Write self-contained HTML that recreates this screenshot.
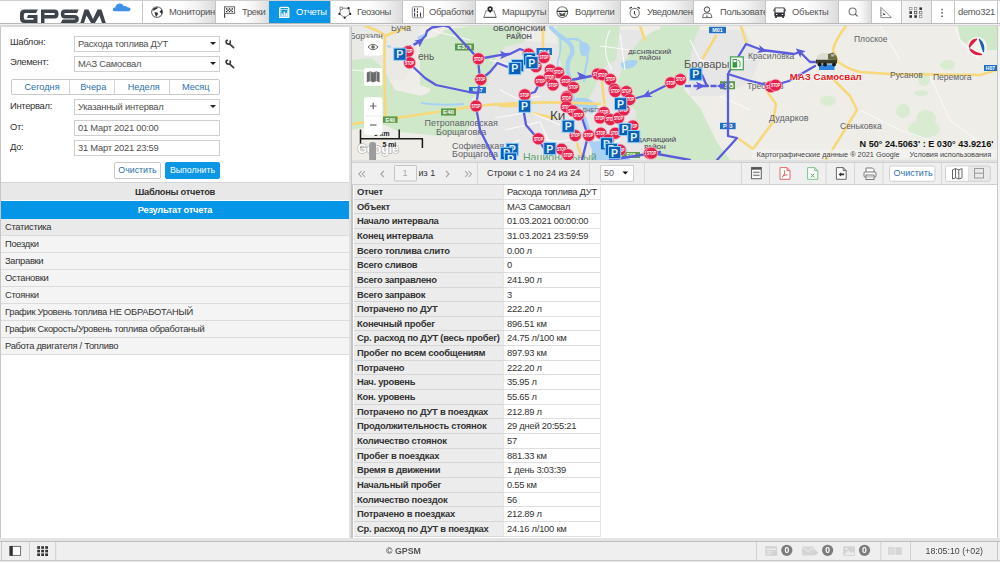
<!DOCTYPE html>
<html><head><meta charset="utf-8">
<style>
*{box-sizing:border-box}
html,body{margin:0;padding:0}
body{filter:blur(0.3px)}
body{width:1000px;height:562px;overflow:hidden;position:relative;font-family:"Liberation Sans",sans-serif;font-size:8.8px;color:#333;background:#fff}
.a{position:absolute}
#hdr{left:0;top:0;width:1000px;height:24px;background:#fff;border-top:1px solid #cfcfcf;border-bottom:1px solid #b9b9b9}
#hdr2{left:0;top:24px;width:352px;height:3px;background:linear-gradient(#f0f0f0 0%,#f0f0f0 25%,#d9d9d9 40%,#dadada 100%);z-index:2}
#hdr3{left:352px;top:24px;width:648px;height:2px;background:linear-gradient(#f0f0f0 0%,#f0f0f0 35%,#d9d9d9 50%,#dadada 100%)}
.tab{position:absolute;top:1px;height:22px;border-left:1px solid #c4c4c4;background:linear-gradient(to right,#fff 0%,#fff 50%,#f2f2f2 75%,#dcdcdc 100%);white-space:nowrap;overflow:hidden;color:#555;line-height:22px}
.tab .ic{position:absolute;top:5px;left:9px;width:13px;height:13px}
.tab .tx{position:absolute;left:26px;top:0;font-size:9.4px;letter-spacing:-0.3px}
.tab.act{background:#0b97e6;color:#fff;border-left-color:#0b97e6}
/* left panel */
#lp{left:0;top:26px;width:350px;height:512px;background:#fff}
#lpb{left:0;top:26px;width:1px;height:512px;background:#c6c6c6}
.lbl{position:absolute;left:10px;color:#333;font-size:9.4px;letter-spacing:-0.3px}
.sel{position:absolute;left:74px;width:146px;height:16px;border:1px solid #cfcfcf;background:#fff;color:#505050;padding-left:3px;line-height:14px;white-space:nowrap;font-size:9.4px;letter-spacing:-0.25px}
.sel .arr{position:absolute;right:3.5px;top:5px;width:0;height:0;border-left:3px solid transparent;border-right:3px solid transparent;border-top:3px solid #222}
.btn{position:absolute;height:17px;border:1px solid #c8c8c8;border-radius:2px;background:#fff;color:#2d6fa8;text-align:center;line-height:15px}
.sec{position:absolute;left:1px;width:348px;font-weight:bold;text-align:center;font-size:9.3px;letter-spacing:-0.25px}
.li{position:absolute;left:1px;width:348px;height:17px;border-bottom:1px solid #dcdcdc;background:#f4f4f4;padding-left:4px;line-height:16px;color:#333;font-size:9.4px;letter-spacing:-0.3px}
/* right */
#sep{left:349px;top:26px;width:3px;height:512px;background:#e0e0e0;border-right:1px solid #c4c4c4}
#map{left:352px;top:26px;width:645px;height:134px;overflow:hidden;background:#e9eae6}
#sep2{left:352px;top:160px;width:645px;height:3px;background:#e0e0e0}
#tb{left:352px;top:162px;width:645px;height:23px;background:#efefef;border-top:1px solid #d0d0d0;border-bottom:1px solid #cfcfcf}
.vs{position:absolute;top:0;width:1px;height:21px;background:#d6d6d6}
#tbl{left:352px;top:185px;width:645px;height:353px;background:#fff;border-left:1px solid #c4c4c4}
.r{position:absolute;left:0;height:15px;white-space:nowrap;font-size:9.4px;letter-spacing:-0.25px}
.r .k{position:absolute;left:1px;top:0;width:149px;height:100%;background:#ececec;font-weight:bold;color:#333;padding-left:3px;line-height:14px;border-bottom:1px solid #d6d6d6}
.r .v{position:absolute;left:150px;top:0;width:98px;height:100%;background:#fff;color:#333;padding-left:3px;line-height:14px;border-bottom:1px solid #dedede;border-left:1px solid #e4e4e4;border-right:1px solid #e4e4e4}
#rb{left:997px;top:26px;width:1px;height:512px;background:#c8c8c8}
#rb2{left:998px;top:26px;width:2px;height:512px;background:#f4f4f4}
#bot{left:0;top:538px;width:1000px;height:3px;background:#e4e4e4}
#ftr{left:0;top:541px;width:1000px;height:20px;background:#efefef;border-top:1px solid #bdbdbd;border-bottom:1px solid #c9c9c9}
#ftr2{left:0;top:561px;width:1000px;height:1px;background:#e4e4e4}
</style></head><body>

<div id="hdr" class="a"></div>
<div id="hdr2" class="a"></div>
<div id="hdr3" class="a"></div>

<!-- logo -->
<svg class="a" style="left:0;top:0" width="142" height="24" viewBox="0 0 142 24">
  <g fill="#3d444b">
    <!-- G -->
    <path d="M24.5 9.5 H38 L36 13 H25.5 Q23.8 13 23.8 15 V17.5 Q23.8 19.8 25.5 19.8 H33.5 V18 H27 L28 15 H37.5 V23 H24.5 Q20 23 20 18.5 V14 Q20 9.5 24.5 9.5 Z"/>
    <!-- P -->
    <path d="M41 9.5 H54.5 Q58.5 9.5 58.5 13.5 V14.5 Q58.5 18.5 54.5 18.5 H44.5 V23 H41 Z M44.5 13 V15 H53.5 Q55 15 55 14 Q55 13 53.5 13 Z"/>
    <!-- S -->
    <path d="M64.5 9.5 H78.8 L77 13 H65.5 Q64.2 13 64.2 14 Q64.2 15 65.5 15 H74.5 Q78.8 15 78.8 19 Q78.8 23 74.5 23 H60.8 L62.5 19.5 H74 Q75.3 19.5 75.3 18.5 Q75.3 18.5 74 18.5 H65 Q60.8 18.5 60.8 14 Q60.8 9.5 64.5 9.5 Z"/>
    <!-- M -->
    <path d="M80.3 23 L84.5 9.5 H88.5 L93 19 L97.5 9.5 H101.5 L105.8 23 H102 L99.5 15.5 L95 23 H91 L86.5 15.5 L84 23 Z"/>
  </g>
  <path fill="#3f90e8" d="M114.5 11.2 Q112.6 11.2 112.8 9.2 Q113.2 7.4 115.3 7.6 Q115.8 4.3 119.2 3.6 Q122.6 3.2 124 6.3 Q126 5.6 127.4 7.2 Q130.8 7.5 130.6 9.6 Q130.2 11.2 128.6 11.2 Z"/>
</svg>

<!-- tabs -->
<div class="tab" style="left:142px;width:73px"><span class="tx">Мониторинг</span></div>
<div class="tab" style="left:215px;width:54px"><span class="tx">Треки</span></div>
<div class="tab act" style="left:269px;width:61px"><span class="tx">Отчеты</span></div>
<div class="tab" style="left:330px;width:72px"><span class="tx">Геозоны</span></div>
<div class="tab" style="left:402px;width:73px"><span class="tx">Обработки</span></div>
<div class="tab" style="left:475px;width:73px"><span class="tx">Маршруты</span></div>
<div class="tab" style="left:548px;width:72px"><span class="tx">Водители</span></div>
<div class="tab" style="left:620px;width:73px"><span class="tx">Уведомления</span></div>
<div class="tab" style="left:693px;width:72px"><span class="tx">Пользователи</span></div>
<div class="tab" style="left:765px;width:73px"><span class="tx">Объекты</span></div>
<div class="tab" style="left:838px;width:33px"></div>
<div class="tab" style="left:871px;width:30px;background:#fff"></div>
<div class="tab" style="left:901px;width:30px;background:linear-gradient(to right,#f4f4f4,#ececec)"></div>
<div class="tab" style="left:931px;width:23px;background:#fff"></div>
<div class="tab" style="left:954px;width:44px;background:#fff;border-right:1px solid #c4c4c4"><span class="tx" style="left:3px">demo321</span></div>

<svg class="a" style="left:0;top:0;pointer-events:none" width="1000" height="24" viewBox="0 0 1000 24">
  <!-- globe -->
  <circle cx="157" cy="12.1" r="5.4" fill="#fff" stroke="#6f6f6f" stroke-width="1.1"/>
  <path d="M152.5 10.5 Q153 8 156 7.2 L158.5 7.4 Q157 8.8 155.5 9.6 Q154 10.8 152.5 10.5 Z" fill="#2d2d2d"/>
  <path d="M154.5 12.5 Q156.5 11.8 158 13 Q157.5 15.2 156.2 17 Q155 14.5 154.5 12.5 Z" fill="#2d2d2d"/>
  <path d="M159.5 11.5 L162 9.6 Q162.8 12 162 14.5 Q161 13 159.5 11.5 Z" fill="#2d2d2d"/>
  <!-- flag -->
  <path d="M224.6 6.8 V17.7" stroke="#444" stroke-width="1.2"/>
  <rect x="224.6" y="6.8" width="10" height="6.6" fill="#fff" stroke="#666" stroke-width="1"/>
  <g fill="#333"><rect x="226" y="8.2" width="1.4" height="1.4"/><rect x="228.8" y="8.2" width="1.4" height="1.4"/><rect x="231.6" y="8.2" width="1.4" height="1.4"/>
  <rect x="227.4" y="9.6" width="1.4" height="1.4"/><rect x="230.2" y="9.6" width="1.4" height="1.4"/><rect x="226" y="11" width="1.4" height="1.2"/><rect x="228.8" y="11" width="1.4" height="1.2"/><rect x="231.6" y="11" width="1.4" height="1.2"/></g>
  <!-- reports (white on blue) -->
  <path d="M279.7 17.2 V8.8 Q279.7 7.4 281.2 7.4 H287.3 Q288.7 7.4 288.7 8.8 V17.2 Z" fill="none" stroke="#fff" stroke-width="1.4"/>
  <rect x="281" y="9.6" width="6.4" height="6.6" fill="none" stroke="#d6eefc" stroke-width="0.8"/>
  <g fill="#fff"><rect x="281.6" y="13.6" width="1.5" height="2.4"/><rect x="283.6" y="11.6" width="1.5" height="4.4"/><rect x="285.6" y="12.8" width="1.5" height="3.2"/></g>
  <!-- geozones -->
  <path d="M341.1 8.2 L348.6 8.2 L350.2 13.9 L344.7 17.7 L339.5 13.9 Z" fill="none" stroke="#777" stroke-width="0.9"/>
  <rect x="340" y="7.1" width="2.3" height="2.3" fill="#fff" stroke="#777" stroke-width="0.8"/>
  <g fill="#222"><circle cx="348.6" cy="8.2" r="1.1"/><circle cx="350.2" cy="13.9" r="1.1"/><circle cx="344.7" cy="17.7" r="1.1"/><circle cx="339.5" cy="13.9" r="1.1"/></g>
  <!-- obrabotki -->
  <rect x="412.3" y="6.8" width="11.2" height="11" rx="1" fill="#fff" stroke="#8d8d8d" stroke-width="1"/>
  <path d="M414.6 8.3 V11.8 M414.6 12.8 V16.8" stroke="#3b3b55" stroke-width="1.1"/>
  <path d="M417.4 8.3 V9.8 M417.4 10.8 V13 M417.4 14 V16.8" stroke="#3b3322" stroke-width="1"/>
  <path d="M420.5 12.5 V16.8" stroke="#3b3b55" stroke-width="1.1"/>
  <!-- marshruty -->
  <path d="M486 10.8 H494 L496.2 17.5 H483.8 Z" fill="#fff" stroke="#777" stroke-width="0.9"/>
  <path d="M483.8 17.4 H496.2" stroke="#666" stroke-width="1.2"/>
  <path d="M490.1 13 Q487.3 10.5 487.4 9 A2.7 2.7 0 0 1 492.8 9 Q492.9 10.5 490.1 13 Z" fill="#2b2b2b"/>
  <circle cx="490.1" cy="8.9" r="1" fill="#fff"/>
  <!-- driver wheel -->
  <circle cx="562.3" cy="12.1" r="5.4" fill="#fff" stroke="#6e6e6e" stroke-width="1.1"/>
  <path d="M557 11.3 H567.6" stroke="#222" stroke-width="1.2"/>
  <path d="M559 12 Q562.3 15 565.6 12 L564.8 16 H559.8 Z" fill="#555"/>
  <circle cx="562.3" cy="13.2" r="0.8" fill="#ddd"/>
  <!-- alarm -->
  <circle cx="634.7" cy="13" r="4.6" fill="#fff" stroke="#7a7a7a" stroke-width="1.1"/>
  <path d="M629.5 8.6 L631.8 6.9 M637.6 6.9 L639.9 8.6" stroke="#333" stroke-width="1.2"/>
  <path d="M634.4 11 V14 L635.8 15.2" fill="none" stroke="#333" stroke-width="1"/>
  <!-- user -->
  <circle cx="707" cy="9.6" r="2.7" fill="#fff" stroke="#444" stroke-width="1"/>
  <path d="M702.6 17.6 Q702.6 13.5 705 13.2 H709 Q711.9 13.5 711.9 17.6 Z" fill="#fff" stroke="#6a6a6a" stroke-width="1"/>
  <path d="M707 14 L707.7 17 H706.3 Z" fill="#5a3a44"/>
  <!-- bus -->
  <rect x="774.4" y="7.4" width="10.4" height="9.4" rx="1" fill="#2e2e36"/>
  <rect x="775.5" y="8.3" width="8.2" height="4.2" fill="#fff"/>
  <rect x="776" y="14" width="1.5" height="1" fill="#fff"/><rect x="781.7" y="14" width="1.5" height="1" fill="#fff"/>
  <rect x="775" y="16.5" width="2" height="1.3" fill="#222"/><rect x="782" y="16.5" width="2" height="1.3" fill="#222"/>
  <rect x="773.4" y="9.4" width="1" height="1.8" fill="#333"/><rect x="784.8" y="9.4" width="1" height="1.8" fill="#333"/>
  <!-- search -->
  <circle cx="852.6" cy="11.5" r="3.5" fill="none" stroke="#777" stroke-width="1.1"/>
  <path d="M855.2 14 L857.6 16.4" stroke="#666" stroke-width="1.2"/>
  <!-- ruler -->
  <path d="M880.8 7.3 V17.6 H891.4 Z" fill="#fff" stroke="#8a8a8a" stroke-width="1"/>
  <path d="M880.8 10.5 H882.3 M880.8 13 H882.3 M880.8 15.5 H882.3" stroke="#777" stroke-width="0.7"/>
  <path d="M883.3 12.6 L885.6 15 H883.3 Z" fill="#333"/>
  <!-- grid -->
  <g>
   <rect x="909.6" y="7.5" width="2.4" height="2.4" fill="#fff" stroke="#888" stroke-width="0.7"/>
   <rect x="914.4" y="7.5" width="2.4" height="2.4" fill="#fff" stroke="#888" stroke-width="0.7"/>
   <rect x="919.4" y="7.4" width="2.6" height="2.6" fill="#333"/>
   <rect x="909.4" y="11.3" width="2.6" height="2.6" fill="#333"/>
   <rect x="914.4" y="11.4" width="2.4" height="2.4" fill="#fff" stroke="#555" stroke-width="0.8"/>
   <rect x="919.5" y="11.4" width="2.4" height="2.4" fill="#fff" stroke="#777" stroke-width="0.8"/>
   <rect x="909.4" y="15.2" width="2.6" height="2.6" fill="#333"/>
   <rect x="914.3" y="15.2" width="2.6" height="2.6" fill="#333"/>
   <rect x="919.5" y="15.3" width="2.4" height="2.4" fill="#fff" stroke="#888" stroke-width="0.7"/>
  </g>
  <!-- menu -->
  <g fill="#555"><rect x="941.3" y="8.8" width="1.5" height="1.5"/><rect x="941.3" y="12.1" width="1.5" height="1.5"/><rect x="941.3" y="15.6" width="1.5" height="1.5"/></g>
</svg>

<!-- left panel -->
<div id="lp" class="a">
  <span class="lbl" style="top:10px">Шаблон:</span>
  <div class="sel" style="top:10px">Расхода топлива ДУТ<i class="arr"></i></div>
  <span class="lbl" style="top:30px">Элемент:</span>
  <div class="sel" style="top:30px">МАЗ Самосвал<i class="arr"></i></div>
  <div class="btn" style="left:11px;top:53px;width:209px;height:16px;border-radius:2px"></div>
  <div class="a" style="left:69px;top:54px;width:1px;height:14px;background:#d4d4d4"></div>
  <div class="a" style="left:114px;top:54px;width:1px;height:14px;background:#d4d4d4"></div>
  <div class="a" style="left:169px;top:54px;width:1px;height:14px;background:#d4d4d4"></div>
  <span class="a" style="left:24.4px;top:55.5px;color:#2d70aa;font-size:9.2px">Сегодня</span>
  <span class="a" style="left:80.3px;top:55.5px;color:#2d70aa;font-size:9.2px">Вчера</span>
  <span class="a" style="left:127.7px;top:55.5px;color:#2d70aa;font-size:9.2px">Неделя</span>
  <span class="a" style="left:181.9px;top:55.5px;color:#2d70aa;font-size:9.2px">Месяц</span>
  <svg class="a" style="left:220px;top:8px" width="20" height="40" viewBox="0 0 20 40">
    <g fill="none" stroke="#3d3d3d" stroke-linecap="round">
      <path d="M7.3 6.3 Q5.8 6.5 6.2 8.6 Q7 10.6 9.3 10 Q10.8 9.3 10.3 7.2" stroke-width="1.7"/>
      <path d="M9.5 9.8 L13.6 13.6" stroke-width="1.8"/>
      <path d="M7.3 26.3 Q5.8 26.5 6.2 28.6 Q7 30.6 9.3 30 Q10.8 29.3 10.3 27.2" stroke-width="1.7"/>
      <path d="M9.5 29.8 L13.6 33.6" stroke-width="1.8"/>
    </g>
  </svg>
  <span class="lbl" style="top:74px">Интервал:</span>
  <div class="sel" style="top:73px">Указанный интервал<i class="arr"></i></div>
  <span class="lbl" style="top:95px">От:</span>
  <div class="sel" style="top:94px">01 Март 2021 00:00</div>
  <span class="lbl" style="top:115px">До:</span>
  <div class="sel" style="top:114px">31 Март 2021 23:59</div>
  <div class="btn" style="left:114px;top:136px;width:47px">Очистить</div>
  <div class="btn" style="left:165px;top:136px;width:55px;background:#0b97e6;border-color:#0b97e6;color:#fff">Выполнить</div>
  <div class="sec" style="top:156px;height:18px;line-height:18px;background:#e8e8e8;border-top:1px solid #d6d6d6;color:#333">Шаблоны отчетов</div>
  <div class="sec" style="top:175px;height:18px;line-height:18px;background:#0596e8;color:#fff">Результат отчета</div>
  <div class="li" style="top:193px;height:17px;background:#eaeaea">Статистика</div>
  <div class="li" style="top:210px">Поездки</div>
  <div class="li" style="top:227px">Заправки</div>
  <div class="li" style="top:244px">Остановки</div>
  <div class="li" style="top:261px">Стоянки</div>
  <div class="li" style="top:278px">График Уровень топлива НЕ ОБРАБОТАНЫЙ</div>
  <div class="li" style="top:295px">График Скорость/Уровень топлива обработаный</div>
  <div class="li" style="top:312px">Работа двигателя / Топливо</div>
</div>
<div id="sep" class="a"></div>
<div id="lpb" class="a"></div>

<!-- map -->
<div id="map" class="a">
<svg class="a" style="left:0;top:0" width="645" height="134" viewBox="352 26 645 134">
<rect x="352" y="26" width="645" height="134" fill="#eeede8"/>
<path fill="#e9e9e6" d="M352 26 L420 26 L415 60 L405 80 L352 80 Z"/>
<path fill="#e6e6e6" d="M470 50 L520 40 L560 44 L600 30 L640 30 L650 60 L660 90 L668 120 L676 160 L470 160 L480 110 Z"/>
<path fill="#e6e6e6" d="M692 30 L745 30 L760 60 L750 82 L720 96 L690 96 L686 70 Z"/>
<path fill="#d0e8ca" d="M352 60 L372 58 L384 70 L395 90 L420 96 L430 92 L432 40 L445 30 L470 26 L520 26 L525 42 L500 48 L494 62 L486 90 L470 100 L440 104 L420 110 L400 116 L380 124 L352 130 Z"/>
<path fill="#d0e8ca" d="M420 40 L470 30 L500 34 L505 48 L492 58 L488 80 L470 96 L440 92 L420 85 Z"/>
<path fill="#d0e8ca" d="M420 98 L470 96 L478 112 L470 124 L455 128 L430 128 L415 120 Z"/>
<path fill="#d0e8ca" d="M352 88 L400 92 L420 96 L470 100 L476 118 L466 132 L440 136 L400 132 L385 125 L352 128 Z"/>
<path fill="#d0e8ca" d="M572 26 L620 26 L616 60 L600 70 L585 72 L575 58 Z"/>
<path fill="#d0e8ca" d="M625 60 L640 40 L655 30 L700 26 L694 40 L688 70 L684 90 L700 108 L717 143 L730 160 L655 160 L640 140 L636 110 L622 100 L618 80 Z"/>
<path fill="#d0e8ca" d="M636 96 L684 90 L700 108 L717 143 L730 160 L655 160 L640 140 L636 120 Z"/>
<path fill="#d0e8ca" d="M660 26 L700 26 L690 50 L665 56 Z"/>
<path fill="#d0e8ca" d="M958 26 L997 26 L997 50 L975 50 L960 40 Z"/>
<ellipse cx="903.0" cy="111.0" rx="7.0" ry="7.0" fill="#d9ecd2"/>
<ellipse cx="924.0" cy="129.0" rx="16.0" ry="9.0" fill="#d9ecd2"/>
<ellipse cx="926.0" cy="119.0" rx="10.0" ry="9.0" fill="#d9ecd2"/>
<ellipse cx="828.0" cy="101.0" rx="8.0" ry="5.0" fill="#d9ecd2"/>
<ellipse cx="921.0" cy="93.0" rx="7.0" ry="3.0" fill="#d9ecd2"/>
<ellipse cx="947.5" cy="65.0" rx="7.5" ry="5.0" fill="#d9ecd2"/>
<ellipse cx="924.0" cy="79.0" rx="6.0" ry="7.0" fill="#d9ecd2"/>
<path fill="#d0e8ca" d="M556 26 L600 26 L602 50 L596 86 L588 100 L578 100 L566 86 L560 60 Z"/>
<path fill="none" stroke="#a9d1f2" stroke-width="4.2" stroke-linejoin="round" d="M550 26 Q556 34 566 40 Q574 46 572 54 Q566 62 568 72 Q571 80 570 90 Q574 104 582 114 Q588 126 590 140 Q594 150 600 160"/>
<path fill="none" stroke="#a9d1f2" stroke-width="2.2" stroke-linejoin="round" d="M566 40 Q580 36 584 46 Q590 56 586 66 Q584 74 584 82"/>
<path fill="none" stroke="#a9d1f2" stroke-width="1.6" d="M560 38 Q562 50 558 60 Q556 68 560 76"/>
<path fill="#a9d1f2" d="M580 42 Q590 41 590 50 Q589 57 582 56 Q578 50 580 42 Z"/>
<path fill="#a9d1f2" d="M621 63 Q632 58 638 61 Q636 68 626 69 Q620 68 621 63 Z"/>
<path fill="#a9d1f2" d="M592 142 L606 140 L626 146 L630 160 L592 160 Z"/>
<path fill="#a9d1f2" d="M576 98 Q590 96 598 106 L592 114 Q582 108 576 104 Z"/>
<path fill="none" stroke="#a9d1f2" stroke-width="2.5" d="M418 38 L427 34"/>
<path fill="none" stroke="#a9d1f2" stroke-width="2" d="M421 103 Q440 106 464 104"/>
<path fill="none" stroke="#a9d1f2" stroke-width="2" d="M387 46 L391 47"/>
<path fill="none" stroke="#f7d87a" stroke-width="2.6" stroke-linecap="round" d="M365 26 Q378 30 385 36 Q384 60 385 96 L386 122"/>
<path fill="none" stroke="#f7d87a" stroke-width="2.6" stroke-linecap="round" d="M385 36 L410 26"/>
<path fill="none" stroke="#f7d87a" stroke-width="2.6" stroke-linecap="round" d="M352 124 Q420 115 476 106 Q540 100 600 104"/>
<path fill="none" stroke="#f7d87a" stroke-width="2.6" stroke-linecap="round" d="M500 106 L518 106 M532 113 L554 118"/>
<path fill="none" stroke="#f7d87a" stroke-width="2.6" stroke-linecap="round" d="M543 26 L543 47"/>
<path fill="none" stroke="#f7d87a" stroke-width="2.6" stroke-linecap="round" d="M602 82 L605 110"/>
<path fill="none" stroke="#f7d87a" stroke-width="2.6" stroke-linecap="round" d="M577 144 L583 160"/>
<path fill="none" stroke="#f7d87a" stroke-width="2.6" stroke-linecap="round" d="M716 36 L703 58"/>
<path fill="none" stroke="#f7d87a" stroke-width="2.6" stroke-linecap="round" d="M741 26 L746 42"/>
<path fill="none" stroke="#f7d87a" stroke-width="2.6" stroke-linecap="round" d="M768 93 L776 104 L773 122 L753 149 L739 139"/>
<path fill="none" stroke="#f7d87a" stroke-width="2.6" stroke-linecap="round" d="M846 26 Q835 40 833 50 L838 62 Q850 70 860 72 L890 74 L980 75 L997 70"/>
<path fill="none" stroke="#f7d87a" stroke-width="2.6" stroke-linecap="round" d="M834 80 L850 96 L857 110 L826 160"/>
<path fill="none" stroke="#f7d87a" stroke-width="2.6" stroke-linecap="round" d="M640 26 L645 40"/>
<path fill="none" stroke="#fafafa" stroke-width="1.1" d="M495 118 L530 112 L560 125"/>
<path fill="none" stroke="#fafafa" stroke-width="1.1" d="M505 130 L540 122 L548 140"/>
<path fill="none" stroke="#fafafa" stroke-width="1.1" d="M500 90 L520 100 L540 96"/>
<path fill="none" stroke="#fafafa" stroke-width="1.1" d="M530 130 Q545 145 570 140"/>
<path fill="none" stroke="#fafafa" stroke-width="1.1" d="M610 30 Q600 50 612 70"/>
<path fill="none" stroke="#fafafa" stroke-width="1.1" d="M620 34 L625 70"/>
<path fill="none" stroke="#fafafa" stroke-width="1.1" d="M600 46 L630 50"/>
<path fill="none" stroke="#fafafa" stroke-width="1.1" d="M495 150 L520 140"/>
<path fill="none" stroke="#fafafa" stroke-width="1.1" d="M690 40 L700 60 L740 70"/>
<path fill="none" stroke="#fafafa" stroke-width="1.1" d="M720 96 L750 110"/>
<path fill="none" stroke="#fafafa" stroke-width="1.1" d="M600 150 L620 140"/>
<path fill="none" stroke="#f7f7f7" stroke-width="1.2" d="M352 70 L380 72"/>
<path fill="none" stroke="#f7f7f7" stroke-width="1.2" d="M430 30 L470 40"/>
<path fill="none" stroke="#f7f7f7" stroke-width="1.2" d="M490 60 L530 70"/>
<path fill="none" stroke="#f7f7f7" stroke-width="1.2" d="M740 60 L800 56"/>
<path fill="none" stroke="#f7f7f7" stroke-width="1.2" d="M880 26 L900 60"/>
<path fill="none" stroke="#f7f7f7" stroke-width="1.2" d="M955 26 L960 40 L980 60"/>
<path fill="none" stroke="#f7f7f7" stroke-width="1.2" d="M860 110 L900 130 L960 150"/>
<path fill="none" stroke="#f7f7f7" stroke-width="1.2" d="M930 76 L950 120 L990 150"/>
<text x="391" y="31" font-size="9" fill="#606368" font-weight="normal" font-family="Liberation Sans">Буча</text>
<text x="350" y="38.5" font-size="8.5" fill="#606368" font-weight="normal" font-family="Liberation Sans">Борзэлн</text>
<text x="418" y="60" font-size="10" fill="#555" font-weight="normal" font-family="Liberation Sans">ень</text>
<text x="492.9" y="30.6" font-size="7.3" fill="#606368" font-weight="bold" font-family="Liberation Sans">ОБОЛОНСКИЙ</text>
<text x="506.2" y="39" font-size="7.3" fill="#606368" font-weight="bold" font-family="Liberation Sans">РАЙОН</text>
<text x="628.2" y="53.6" font-size="6.1" fill="#606368" font-weight="bold" font-family="Liberation Sans">ДЕСНЯНСКИЙ</text>
<text x="639.2" y="59.9" font-size="6.1" fill="#606368" font-weight="bold" font-family="Liberation Sans">РАЙОН</text>
<text x="424.5" y="126.3" font-size="9" fill="#606368" font-weight="normal" font-family="Liberation Sans">Петропавловская</text>
<text x="436" y="135" font-size="9" fill="#606368" font-weight="normal" font-family="Liberation Sans">Борщаговка</text>
<text x="452" y="148.5" font-size="9" fill="#606368" font-weight="normal" font-family="Liberation Sans">Софиевская</text>
<text x="452" y="156.8" font-size="9" fill="#606368" font-weight="normal" font-family="Liberation Sans">Борщагова</text>
<text x="550" y="119.5" font-size="13.5" fill="#444" font-weight="normal" font-family="Liberation Sans">Ки</text>
<text x="582" y="112" font-size="6" fill="#606368" font-weight="normal" font-family="Liberation Sans">ДНЕПР</text>
<text x="637.6" y="141.9" font-size="6.1" fill="#606368" font-weight="bold" font-family="Liberation Sans">ДАРНИЦКИЙ</text>
<text x="644.3" y="148.8" font-size="6.1" fill="#606368" font-weight="bold" font-family="Liberation Sans">РАЙОН</text>
<text x="684" y="67.5" font-size="11" fill="#555" font-weight="normal" font-family="Liberation Sans">Бровары</text>
<text x="748" y="59" font-size="8.5" fill="#606368" font-weight="normal" font-family="Liberation Sans">Красиловка</text>
<text x="747" y="89" font-size="8.5" fill="#606368" font-weight="normal" font-family="Liberation Sans">Требухов</text>
<text x="769" y="120.5" font-size="9" fill="#606368" font-weight="normal" font-family="Liberation Sans">Дударков</text>
<text x="854" y="42" font-size="8.5" fill="#606368" font-weight="normal" font-family="Liberation Sans">Плоское</text>
<text x="890" y="78" font-size="8.5" fill="#606368" font-weight="normal" font-family="Liberation Sans">Русанов</text>
<text x="933" y="80" font-size="8.5" fill="#606368" font-weight="normal" font-family="Liberation Sans">Перемога</text>
<text x="840" y="129" font-size="8.5" fill="#606368" font-weight="normal" font-family="Liberation Sans">Сеньковка</text>
<text x="523" y="161" font-size="10.5" fill="#5ea46e" font-family="Liberation Sans">Национальный</text>
<rect x="455" y="43.5" width="19" height="7.0" fill="#5c9a4a"/>
<text x="464.5" y="49.3" font-size="5.95" fill="#fff" font-weight="bold" text-anchor="middle" font-family="Liberation Sans">E373</text>
<rect x="469" y="87" width="17" height="6.200000000000003" fill="#1f6fc2"/>
<text x="477.5" y="92.0" font-size="5.270000000000002" fill="#fff" font-weight="bold" text-anchor="middle" font-family="Liberation Sans">M07</text>
<rect x="383" y="116.4" width="14.600000000000023" height="6.3999999999999915" fill="#5c9a4a"/>
<text x="390.3" y="121.6" font-size="5.439999999999992" fill="#fff" font-weight="bold" text-anchor="middle" font-family="Liberation Sans">E40</text>
<rect x="441" y="108.4" width="15" height="7.199999999999989" fill="#5c9a4a"/>
<text x="448.5" y="114.39999999999999" font-size="6.11999999999999" fill="#fff" font-weight="bold" text-anchor="middle" font-family="Liberation Sans">E40</text>
<rect x="709" y="26.8" width="17" height="6.400000000000002" fill="#1f6fc2"/>
<text x="717.5" y="32.0" font-size="5.440000000000001" fill="#fff" font-weight="bold" text-anchor="middle" font-family="Liberation Sans">M01</text>
<rect x="720" y="81.2" width="15" height="8.0" fill="#5c9a4a"/>
<text x="727.5" y="88.0" font-size="6.8" fill="#fff" font-weight="bold" text-anchor="middle" font-family="Liberation Sans">E95</text>
<rect x="720" y="122.8" width="15.600000000000023" height="6.3999999999999915" fill="#1f6fc2"/>
<text x="727.8" y="127.99999999999999" font-size="5.439999999999992" fill="#fff" font-weight="bold" text-anchor="middle" font-family="Liberation Sans">P03</text>
<rect x="984" y="65" width="13" height="6" fill="#1f6fc2"/>
<text x="990.5" y="69.8" font-size="5.1" fill="#fff" font-weight="bold" text-anchor="middle" font-family="Liberation Sans">H07</text>
<rect x="536.5" y="48" width="15.5" height="7" fill="#1f6fc2"/>
<text x="544.25" y="53.8" font-size="5.95" fill="#fff" font-weight="bold" text-anchor="middle" font-family="Liberation Sans">P04</text>
<rect x="622" y="152" width="18" height="6" fill="#5c9a4a"/>
<text x="631.0" y="156.8" font-size="5.1" fill="#fff" font-weight="bold" text-anchor="middle" font-family="Liberation Sans">E95</text>
<path fill="none" stroke="#5b5cdc" stroke-width="2.6" stroke-dasharray="6 2.5" d="M685 86 L725 86"/>
<path fill="none" stroke="#5b5cdc" stroke-width="2.6" stroke-dasharray="6 2.5" d="M406 49 L419 42"/>
<path fill="none" stroke="#5b5cdc" stroke-width="2.3" stroke-linejoin="round" stroke-linecap="round" d="M420 41 L425.5 36 L427 31 L432 27.5 L443 25.5 L449 27 L473 53 L478 59"/>
<path fill="none" stroke="#5b5cdc" stroke-width="2.3" stroke-linejoin="round" stroke-linecap="round" d="M478 59 L504 54.4 L510 54 L520 49 L528 52"/>
<path fill="none" stroke="#5b5cdc" stroke-width="2.3" stroke-linejoin="round" stroke-linecap="round" d="M478 59 L480 80 L490 72 L497.5 63 L507 66.7"/>
<path fill="none" stroke="#5b5cdc" stroke-width="2.3" stroke-linejoin="round" stroke-linecap="round" d="M480 80 L476 106 L480 130 L490 150 L495 160"/>
<path fill="none" stroke="#5b5cdc" stroke-width="2.3" stroke-linejoin="round" stroke-linecap="round" d="M409 63 L425 78 L436 85 L469 92 L478 93"/>
<path fill="none" stroke="#5b5cdc" stroke-width="2.3" stroke-linejoin="round" stroke-linecap="round" d="M524 113 L526 125 L538 139 L545 150"/>
<path fill="none" stroke="#5b5cdc" stroke-width="2.3" stroke-linejoin="round" stroke-linecap="round" d="M566 81 L597 75"/>
<path fill="none" stroke="#5b5cdc" stroke-width="2.3" stroke-linejoin="round" stroke-linecap="round" d="M582 118 L588 136 L582 160"/>
<path fill="none" stroke="#5b5cdc" stroke-width="2.3" stroke-linejoin="round" stroke-linecap="round" d="M610 160 L660 152"/>
<path fill="none" stroke="#5b5cdc" stroke-width="2.3" stroke-linejoin="round" stroke-linecap="round" d="M633 99 L647 95 L671 83"/>
<path fill="none" stroke="#5b5cdc" stroke-width="2.3" stroke-linejoin="round" stroke-linecap="round" d="M728 74 L728 136 L737 138 L717 160"/>
<path fill="none" stroke="#5b5cdc" stroke-width="2.3" stroke-linejoin="round" stroke-linecap="round" d="M728 74 L747 80 L771 86"/>
<path fill="none" stroke="#5b5cdc" stroke-width="2.3" stroke-linejoin="round" stroke-linecap="round" d="M729 72 L746 44 L762 50 L794 54 L800 52 L810 62 L822 62"/>
<path fill="none" stroke="#5b5cdc" stroke-width="2.3" stroke-linejoin="round" stroke-linecap="round" d="M775 85 L789 81 L815 66"/>
<path fill="none" stroke="#5b5cdc" stroke-width="2.3" stroke-linejoin="round" stroke-linecap="round" d="M652 153 L690 160"/>
<path fill="none" stroke="#5b5cdc" stroke-width="2.3" stroke-linejoin="round" stroke-linecap="round" d="M540 82 L535 92 L525 95"/>
<path fill="none" stroke="#5b5cdc" stroke-width="2.3" stroke-linejoin="round" stroke-linecap="round" d="M702 75 L706 84 L708 86"/>
<path transform="translate(420 41.5) rotate(-38)" d="M5.5 0 L-4 -4.2 L-1.8 0 L-4 4.2 Z" fill="#5b5cdc"/>
<path transform="translate(504 55) rotate(0)" d="M5.5 0 L-4 -4.2 L-1.8 0 L-4 4.2 Z" fill="#5b5cdc"/>
<path transform="translate(581 76) rotate(0)" d="M5.5 0 L-4 -4.2 L-1.8 0 L-4 4.2 Z" fill="#5b5cdc"/>
<path transform="translate(647 95) rotate(155)" d="M5.5 0 L-4 -4.2 L-1.8 0 L-4 4.2 Z" fill="#5b5cdc"/>
<path transform="translate(700 86) rotate(0)" d="M5.5 0 L-4 -4.2 L-1.8 0 L-4 4.2 Z" fill="#5b5cdc"/>
<path transform="translate(722 86) rotate(180)" d="M5.5 0 L-4 -4.2 L-1.8 0 L-4 4.2 Z" fill="#5b5cdc"/>
<path transform="translate(762 50) rotate(15)" d="M5.5 0 L-4 -4.2 L-1.8 0 L-4 4.2 Z" fill="#5b5cdc"/>
<path transform="translate(800 52) rotate(220)" d="M5.5 0 L-4 -4.2 L-1.8 0 L-4 4.2 Z" fill="#5b5cdc"/>
<g transform="translate(408 51.6)"><circle r="6" fill="#e6214b" stroke="#f7b5c5" stroke-width="0.7"/><text x="0" y="1.7" font-size="4.6" font-weight="bold" fill="#fff" text-anchor="middle" font-family="Liberation Sans" textLength="9" lengthAdjust="spacingAndGlyphs">STOP</text></g>
<g transform="translate(409.6 62.8)"><circle r="6" fill="#e6214b" stroke="#f7b5c5" stroke-width="0.7"/><text x="0" y="1.7" font-size="4.6" font-weight="bold" fill="#fff" text-anchor="middle" font-family="Liberation Sans" textLength="9" lengthAdjust="spacingAndGlyphs">STOP</text></g>
<g transform="translate(478.4 58.8)"><circle r="6" fill="#e6214b" stroke="#f7b5c5" stroke-width="0.7"/><text x="0" y="1.7" font-size="4.6" font-weight="bold" fill="#fff" text-anchor="middle" font-family="Liberation Sans" textLength="9" lengthAdjust="spacingAndGlyphs">STOP</text></g>
<g transform="translate(480.8 79.6)"><circle r="6" fill="#e6214b" stroke="#f7b5c5" stroke-width="0.7"/><text x="0" y="1.7" font-size="4.6" font-weight="bold" fill="#fff" text-anchor="middle" font-family="Liberation Sans" textLength="9" lengthAdjust="spacingAndGlyphs">STOP</text></g>
<g transform="translate(476 106)"><circle r="6" fill="#e6214b" stroke="#f7b5c5" stroke-width="0.7"/><text x="0" y="1.7" font-size="4.6" font-weight="bold" fill="#fff" text-anchor="middle" font-family="Liberation Sans" textLength="9" lengthAdjust="spacingAndGlyphs">STOP</text></g>
<g transform="translate(528.5 53.9)"><circle r="6" fill="#e6214b" stroke="#f7b5c5" stroke-width="0.7"/><text x="0" y="1.7" font-size="4.6" font-weight="bold" fill="#fff" text-anchor="middle" font-family="Liberation Sans" textLength="9" lengthAdjust="spacingAndGlyphs">STOP</text></g>
<g transform="translate(536 66.7)"><circle r="6" fill="#e6214b" stroke="#f7b5c5" stroke-width="0.7"/><text x="0" y="1.7" font-size="4.6" font-weight="bold" fill="#fff" text-anchor="middle" font-family="Liberation Sans" textLength="9" lengthAdjust="spacingAndGlyphs">STOP</text></g>
<g transform="translate(544 57.6)"><circle r="6" fill="#e6214b" stroke="#f7b5c5" stroke-width="0.7"/><text x="0" y="1.7" font-size="4.6" font-weight="bold" fill="#fff" text-anchor="middle" font-family="Liberation Sans" textLength="9" lengthAdjust="spacingAndGlyphs">STOP</text></g>
<g transform="translate(550.4 69.9)"><circle r="6" fill="#e6214b" stroke="#f7b5c5" stroke-width="0.7"/><text x="0" y="1.7" font-size="4.6" font-weight="bold" fill="#fff" text-anchor="middle" font-family="Liberation Sans" textLength="9" lengthAdjust="spacingAndGlyphs">STOP</text></g>
<g transform="translate(558.4 72.6)"><circle r="6" fill="#e6214b" stroke="#f7b5c5" stroke-width="0.7"/><text x="0" y="1.7" font-size="4.6" font-weight="bold" fill="#fff" text-anchor="middle" font-family="Liberation Sans" textLength="9" lengthAdjust="spacingAndGlyphs">STOP</text></g>
<g transform="translate(549.3 76.9)"><circle r="6" fill="#e6214b" stroke="#f7b5c5" stroke-width="0.7"/><text x="0" y="1.7" font-size="4.6" font-weight="bold" fill="#fff" text-anchor="middle" font-family="Liberation Sans" textLength="9" lengthAdjust="spacingAndGlyphs">STOP</text></g>
<g transform="translate(540.2 81.1)"><circle r="6" fill="#e6214b" stroke="#f7b5c5" stroke-width="0.7"/><text x="0" y="1.7" font-size="4.6" font-weight="bold" fill="#fff" text-anchor="middle" font-family="Liberation Sans" textLength="9" lengthAdjust="spacingAndGlyphs">STOP</text></g>
<g transform="translate(565.9 81.1)"><circle r="6" fill="#e6214b" stroke="#f7b5c5" stroke-width="0.7"/><text x="0" y="1.7" font-size="4.6" font-weight="bold" fill="#fff" text-anchor="middle" font-family="Liberation Sans" textLength="9" lengthAdjust="spacingAndGlyphs">STOP</text></g>
<g transform="translate(573.6 87.6)"><circle r="6" fill="#e6214b" stroke="#f7b5c5" stroke-width="0.7"/><text x="0" y="1.7" font-size="4.6" font-weight="bold" fill="#fff" text-anchor="middle" font-family="Liberation Sans" textLength="9" lengthAdjust="spacingAndGlyphs">STOP</text></g>
<g transform="translate(566.9 96.6)"><circle r="6" fill="#e6214b" stroke="#f7b5c5" stroke-width="0.7"/><text x="0" y="1.7" font-size="4.6" font-weight="bold" fill="#fff" text-anchor="middle" font-family="Liberation Sans" textLength="9" lengthAdjust="spacingAndGlyphs">STOP</text></g>
<g transform="translate(524.7 95)"><circle r="6" fill="#e6214b" stroke="#f7b5c5" stroke-width="0.7"/><text x="0" y="1.7" font-size="4.6" font-weight="bold" fill="#fff" text-anchor="middle" font-family="Liberation Sans" textLength="9" lengthAdjust="spacingAndGlyphs">STOP</text></g>
<g transform="translate(597.6 74)"><circle r="6" fill="#e6214b" stroke="#f7b5c5" stroke-width="0.7"/><text x="0" y="1.7" font-size="4.6" font-weight="bold" fill="#fff" text-anchor="middle" font-family="Liberation Sans" textLength="9" lengthAdjust="spacingAndGlyphs">STOP</text></g>
<g transform="translate(602.4 74.8)"><circle r="6" fill="#e6214b" stroke="#f7b5c5" stroke-width="0.7"/><text x="0" y="1.7" font-size="4.6" font-weight="bold" fill="#fff" text-anchor="middle" font-family="Liberation Sans" textLength="9" lengthAdjust="spacingAndGlyphs">STOP</text></g>
<g transform="translate(610.4 79.6)"><circle r="6" fill="#e6214b" stroke="#f7b5c5" stroke-width="0.7"/><text x="0" y="1.7" font-size="4.6" font-weight="bold" fill="#fff" text-anchor="middle" font-family="Liberation Sans" textLength="9" lengthAdjust="spacingAndGlyphs">STOP</text></g>
<g transform="translate(614.4 89.2)"><circle r="6" fill="#e6214b" stroke="#f7b5c5" stroke-width="0.7"/><text x="0" y="1.7" font-size="4.6" font-weight="bold" fill="#fff" text-anchor="middle" font-family="Liberation Sans" textLength="9" lengthAdjust="spacingAndGlyphs">STOP</text></g>
<g transform="translate(626.4 91.6)"><circle r="6" fill="#e6214b" stroke="#f7b5c5" stroke-width="0.7"/><text x="0" y="1.7" font-size="4.6" font-weight="bold" fill="#fff" text-anchor="middle" font-family="Liberation Sans" textLength="9" lengthAdjust="spacingAndGlyphs">STOP</text></g>
<g transform="translate(615.2 91.6)"><circle r="6" fill="#e6214b" stroke="#f7b5c5" stroke-width="0.7"/><text x="0" y="1.7" font-size="4.6" font-weight="bold" fill="#fff" text-anchor="middle" font-family="Liberation Sans" textLength="9" lengthAdjust="spacingAndGlyphs">STOP</text></g>
<g transform="translate(524.8 94.8)"><circle r="6" fill="#e6214b" stroke="#f7b5c5" stroke-width="0.7"/><text x="0" y="1.7" font-size="4.6" font-weight="bold" fill="#fff" text-anchor="middle" font-family="Liberation Sans" textLength="9" lengthAdjust="spacingAndGlyphs">STOP</text></g>
<g transform="translate(566.4 98)"><circle r="6" fill="#e6214b" stroke="#f7b5c5" stroke-width="0.7"/><text x="0" y="1.7" font-size="4.6" font-weight="bold" fill="#fff" text-anchor="middle" font-family="Liberation Sans" textLength="9" lengthAdjust="spacingAndGlyphs">STOP</text></g>
<g transform="translate(566.4 106.8)"><circle r="6" fill="#e6214b" stroke="#f7b5c5" stroke-width="0.7"/><text x="0" y="1.7" font-size="4.6" font-weight="bold" fill="#fff" text-anchor="middle" font-family="Liberation Sans" textLength="9" lengthAdjust="spacingAndGlyphs">STOP</text></g>
<g transform="translate(572.8 110.8)"><circle r="6" fill="#e6214b" stroke="#f7b5c5" stroke-width="0.7"/><text x="0" y="1.7" font-size="4.6" font-weight="bold" fill="#fff" text-anchor="middle" font-family="Liberation Sans" textLength="9" lengthAdjust="spacingAndGlyphs">STOP</text></g>
<g transform="translate(578.4 114.8)"><circle r="6" fill="#e6214b" stroke="#f7b5c5" stroke-width="0.7"/><text x="0" y="1.7" font-size="4.6" font-weight="bold" fill="#fff" text-anchor="middle" font-family="Liberation Sans" textLength="9" lengthAdjust="spacingAndGlyphs">STOP</text></g>
<g transform="translate(538.4 138.8)"><circle r="6" fill="#e6214b" stroke="#f7b5c5" stroke-width="0.7"/><text x="0" y="1.7" font-size="4.6" font-weight="bold" fill="#fff" text-anchor="middle" font-family="Liberation Sans" textLength="9" lengthAdjust="spacingAndGlyphs">STOP</text></g>
<g transform="translate(561.6 149.2)"><circle r="6" fill="#e6214b" stroke="#f7b5c5" stroke-width="0.7"/><text x="0" y="1.7" font-size="4.6" font-weight="bold" fill="#fff" text-anchor="middle" font-family="Liberation Sans" textLength="9" lengthAdjust="spacingAndGlyphs">STOP</text></g>
<g transform="translate(568 154.8)"><circle r="6" fill="#e6214b" stroke="#f7b5c5" stroke-width="0.7"/><text x="0" y="1.7" font-size="4.6" font-weight="bold" fill="#fff" text-anchor="middle" font-family="Liberation Sans" textLength="9" lengthAdjust="spacingAndGlyphs">STOP</text></g>
<g transform="translate(575.2 135.6)"><circle r="6" fill="#e6214b" stroke="#f7b5c5" stroke-width="0.7"/><text x="0" y="1.7" font-size="4.6" font-weight="bold" fill="#fff" text-anchor="middle" font-family="Liberation Sans" textLength="9" lengthAdjust="spacingAndGlyphs">STOP</text></g>
<g transform="translate(588.8 135.6)"><circle r="6" fill="#e6214b" stroke="#f7b5c5" stroke-width="0.7"/><text x="0" y="1.7" font-size="4.6" font-weight="bold" fill="#fff" text-anchor="middle" font-family="Liberation Sans" textLength="9" lengthAdjust="spacingAndGlyphs">STOP</text></g>
<g transform="translate(600.8 133.2)"><circle r="6" fill="#e6214b" stroke="#f7b5c5" stroke-width="0.7"/><text x="0" y="1.7" font-size="4.6" font-weight="bold" fill="#fff" text-anchor="middle" font-family="Liberation Sans" textLength="9" lengthAdjust="spacingAndGlyphs">STOP</text></g>
<g transform="translate(615.2 133.2)"><circle r="6" fill="#e6214b" stroke="#f7b5c5" stroke-width="0.7"/><text x="0" y="1.7" font-size="4.6" font-weight="bold" fill="#fff" text-anchor="middle" font-family="Liberation Sans" textLength="9" lengthAdjust="spacingAndGlyphs">STOP</text></g>
<g transform="translate(604 112.4)"><circle r="6" fill="#e6214b" stroke="#f7b5c5" stroke-width="0.7"/><text x="0" y="1.7" font-size="4.6" font-weight="bold" fill="#fff" text-anchor="middle" font-family="Liberation Sans" textLength="9" lengthAdjust="spacingAndGlyphs">STOP</text></g>
<g transform="translate(600 118)"><circle r="6" fill="#e6214b" stroke="#f7b5c5" stroke-width="0.7"/><text x="0" y="1.7" font-size="4.6" font-weight="bold" fill="#fff" text-anchor="middle" font-family="Liberation Sans" textLength="9" lengthAdjust="spacingAndGlyphs">STOP</text></g>
<g transform="translate(610.4 119.6)"><circle r="6" fill="#e6214b" stroke="#f7b5c5" stroke-width="0.7"/><text x="0" y="1.7" font-size="4.6" font-weight="bold" fill="#fff" text-anchor="middle" font-family="Liberation Sans" textLength="9" lengthAdjust="spacingAndGlyphs">STOP</text></g>
<g transform="translate(618.4 118)"><circle r="6" fill="#e6214b" stroke="#f7b5c5" stroke-width="0.7"/><text x="0" y="1.7" font-size="4.6" font-weight="bold" fill="#fff" text-anchor="middle" font-family="Liberation Sans" textLength="9" lengthAdjust="spacingAndGlyphs">STOP</text></g>
<g transform="translate(624 110)"><circle r="6" fill="#e6214b" stroke="#f7b5c5" stroke-width="0.7"/><text x="0" y="1.7" font-size="4.6" font-weight="bold" fill="#fff" text-anchor="middle" font-family="Liberation Sans" textLength="9" lengthAdjust="spacingAndGlyphs">STOP</text></g>
<g transform="translate(629.6 99.6)"><circle r="6" fill="#e6214b" stroke="#f7b5c5" stroke-width="0.7"/><text x="0" y="1.7" font-size="4.6" font-weight="bold" fill="#fff" text-anchor="middle" font-family="Liberation Sans" textLength="9" lengthAdjust="spacingAndGlyphs">STOP</text></g>
<g transform="translate(632.8 126)"><circle r="6" fill="#e6214b" stroke="#f7b5c5" stroke-width="0.7"/><text x="0" y="1.7" font-size="4.6" font-weight="bold" fill="#fff" text-anchor="middle" font-family="Liberation Sans" textLength="9" lengthAdjust="spacingAndGlyphs">STOP</text></g>
<g transform="translate(649.6 153.2)"><circle r="6" fill="#e6214b" stroke="#f7b5c5" stroke-width="0.7"/><text x="0" y="1.7" font-size="4.6" font-weight="bold" fill="#fff" text-anchor="middle" font-family="Liberation Sans" textLength="9" lengthAdjust="spacingAndGlyphs">STOP</text></g>
<g transform="translate(670.8 82.8)"><circle r="6" fill="#e6214b" stroke="#f7b5c5" stroke-width="0.7"/><text x="0" y="1.7" font-size="4.6" font-weight="bold" fill="#fff" text-anchor="middle" font-family="Liberation Sans" textLength="9" lengthAdjust="spacingAndGlyphs">STOP</text></g>
<g transform="translate(680.4 79.6)"><circle r="6" fill="#e6214b" stroke="#f7b5c5" stroke-width="0.7"/><text x="0" y="1.7" font-size="4.6" font-weight="bold" fill="#fff" text-anchor="middle" font-family="Liberation Sans" textLength="9" lengthAdjust="spacingAndGlyphs">STOP</text></g>
<g transform="translate(770.8 86.8)"><circle r="6" fill="#e6214b" stroke="#f7b5c5" stroke-width="0.7"/><text x="0" y="1.7" font-size="4.6" font-weight="bold" fill="#fff" text-anchor="middle" font-family="Liberation Sans" textLength="9" lengthAdjust="spacingAndGlyphs">STOP</text></g>
<g transform="translate(775.6 85.2)"><circle r="6" fill="#e6214b" stroke="#f7b5c5" stroke-width="0.7"/><text x="0" y="1.7" font-size="4.6" font-weight="bold" fill="#fff" text-anchor="middle" font-family="Liberation Sans" textLength="9" lengthAdjust="spacingAndGlyphs">STOP</text></g>
<g transform="translate(651.6 153.2)"><circle r="6" fill="#e6214b" stroke="#f7b5c5" stroke-width="0.7"/><text x="0" y="1.7" font-size="4.6" font-weight="bold" fill="#fff" text-anchor="middle" font-family="Liberation Sans" textLength="9" lengthAdjust="spacingAndGlyphs">STOP</text></g>
<g transform="translate(553 85)"><circle r="6" fill="#e6214b" stroke="#f7b5c5" stroke-width="0.7"/><text x="0" y="1.7" font-size="4.6" font-weight="bold" fill="#fff" text-anchor="middle" font-family="Liberation Sans" textLength="9" lengthAdjust="spacingAndGlyphs">STOP</text></g>
<g transform="translate(608 140)"><circle r="6" fill="#e6214b" stroke="#f7b5c5" stroke-width="0.7"/><text x="0" y="1.7" font-size="4.6" font-weight="bold" fill="#fff" text-anchor="middle" font-family="Liberation Sans" textLength="9" lengthAdjust="spacingAndGlyphs">STOP</text></g>
<g transform="translate(620 150)"><circle r="6" fill="#e6214b" stroke="#f7b5c5" stroke-width="0.7"/><text x="0" y="1.7" font-size="4.6" font-weight="bold" fill="#fff" text-anchor="middle" font-family="Liberation Sans" textLength="9" lengthAdjust="spacingAndGlyphs">STOP</text></g>
<g transform="translate(393.3 47.6)"><rect x="0.5" y="0.5" width="12.2" height="12.2" fill="#0b5fb8" stroke="#8fd0f6" stroke-width="1"/><text x="6.6" y="10.56" font-size="10.56" font-weight="bold" fill="#dff3ff" text-anchor="middle" font-family="Liberation Sans">P</text></g>
<g transform="translate(511 59)"><rect x="0.5" y="0.5" width="12.2" height="12.2" fill="#0b5fb8" stroke="#8fd0f6" stroke-width="1"/><text x="6.6" y="10.56" font-size="10.56" font-weight="bold" fill="#dff3ff" text-anchor="middle" font-family="Liberation Sans">P</text></g>
<g transform="translate(508.2 61.9)"><rect x="0.5" y="0.5" width="12.2" height="12.2" fill="#0b5fb8" stroke="#8fd0f6" stroke-width="1"/><text x="6.6" y="10.56" font-size="10.56" font-weight="bold" fill="#dff3ff" text-anchor="middle" font-family="Liberation Sans">P</text></g>
<g transform="translate(523 52.5)"><rect x="0.5" y="0.5" width="12.2" height="12.2" fill="#0b5fb8" stroke="#8fd0f6" stroke-width="1"/><text x="6.6" y="10.56" font-size="10.56" font-weight="bold" fill="#dff3ff" text-anchor="middle" font-family="Liberation Sans">P</text></g>
<g transform="translate(525.3 56)"><rect x="0.5" y="0.5" width="12.2" height="12.2" fill="#0b5fb8" stroke="#8fd0f6" stroke-width="1"/><text x="6.6" y="10.56" font-size="10.56" font-weight="bold" fill="#dff3ff" text-anchor="middle" font-family="Liberation Sans">P</text></g>
<g transform="translate(518 99.6)"><rect x="0.5" y="0.5" width="12.2" height="12.2" fill="#0b5fb8" stroke="#8fd0f6" stroke-width="1"/><text x="6.6" y="10.56" font-size="10.56" font-weight="bold" fill="#dff3ff" text-anchor="middle" font-family="Liberation Sans">P</text></g>
<g transform="translate(561.6 119.6)"><rect x="0.5" y="0.5" width="12.2" height="12.2" fill="#0b5fb8" stroke="#8fd0f6" stroke-width="1"/><text x="6.6" y="10.56" font-size="10.56" font-weight="bold" fill="#dff3ff" text-anchor="middle" font-family="Liberation Sans">P</text></g>
<g transform="translate(614 97.2)"><rect x="0.5" y="0.5" width="12.2" height="12.2" fill="#0b5fb8" stroke="#8fd0f6" stroke-width="1"/><text x="6.6" y="10.56" font-size="10.56" font-weight="bold" fill="#dff3ff" text-anchor="middle" font-family="Liberation Sans">P</text></g>
<g transform="translate(618.4 122.8)"><rect x="0.5" y="0.5" width="12.2" height="12.2" fill="#0b5fb8" stroke="#8fd0f6" stroke-width="1"/><text x="6.6" y="10.56" font-size="10.56" font-weight="bold" fill="#dff3ff" text-anchor="middle" font-family="Liberation Sans">P</text></g>
<g transform="translate(627.2 130)"><rect x="0.5" y="0.5" width="12.2" height="12.2" fill="#0b5fb8" stroke="#8fd0f6" stroke-width="1"/><text x="6.6" y="10.56" font-size="10.56" font-weight="bold" fill="#dff3ff" text-anchor="middle" font-family="Liberation Sans">P</text></g>
<g transform="translate(600 137.2)"><rect x="0.5" y="0.5" width="12.2" height="12.2" fill="#0b5fb8" stroke="#8fd0f6" stroke-width="1"/><text x="6.6" y="10.56" font-size="10.56" font-weight="bold" fill="#dff3ff" text-anchor="middle" font-family="Liberation Sans">P</text></g>
<g transform="translate(604.8 142.8)"><rect x="0.5" y="0.5" width="12.2" height="12.2" fill="#0b5fb8" stroke="#8fd0f6" stroke-width="1"/><text x="6.6" y="10.56" font-size="10.56" font-weight="bold" fill="#dff3ff" text-anchor="middle" font-family="Liberation Sans">P</text></g>
<g transform="translate(543.2 142)"><rect x="0.5" y="0.5" width="12.2" height="12.2" fill="#0b5fb8" stroke="#8fd0f6" stroke-width="1"/><text x="6.6" y="10.56" font-size="10.56" font-weight="bold" fill="#dff3ff" text-anchor="middle" font-family="Liberation Sans">P</text></g>
<g transform="translate(505.6 142.8)"><rect x="0.5" y="0.5" width="12.2" height="12.2" fill="#0b5fb8" stroke="#8fd0f6" stroke-width="1"/><text x="6.6" y="10.56" font-size="10.56" font-weight="bold" fill="#dff3ff" text-anchor="middle" font-family="Liberation Sans">P</text></g>
<g transform="translate(500 146.8)"><rect x="0.5" y="0.5" width="12.2" height="12.2" fill="#0b5fb8" stroke="#8fd0f6" stroke-width="1"/><text x="6.6" y="10.56" font-size="10.56" font-weight="bold" fill="#dff3ff" text-anchor="middle" font-family="Liberation Sans">P</text></g>
<g transform="translate(504 152.4)"><rect x="0.5" y="0.5" width="12.2" height="12.2" fill="#0b5fb8" stroke="#8fd0f6" stroke-width="1"/><text x="6.6" y="10.56" font-size="10.56" font-weight="bold" fill="#dff3ff" text-anchor="middle" font-family="Liberation Sans">P</text></g>
<g transform="translate(689.2 67.6)"><rect x="0.5" y="0.5" width="12.2" height="12.2" fill="#0b5fb8" stroke="#8fd0f6" stroke-width="1"/><text x="6.6" y="10.56" font-size="10.56" font-weight="bold" fill="#dff3ff" text-anchor="middle" font-family="Liberation Sans">P</text></g>
<g transform="translate(608 146)"><rect x="0.5" y="0.5" width="12.2" height="12.2" fill="#0b5fb8" stroke="#8fd0f6" stroke-width="1"/><text x="6.6" y="10.56" font-size="10.56" font-weight="bold" fill="#dff3ff" text-anchor="middle" font-family="Liberation Sans">P</text></g>
<rect x="730.5" y="56.9" width="12.8" height="12.8" fill="#fff" stroke="#46a84f" stroke-width="1.3"/><rect x="732.6" y="59" width="4.6" height="8.6" fill="#2e9b3c"/><rect x="733.4" y="60" width="3" height="2.2" fill="#fff"/><path d="M738 60 L740 61.5 V66 Q740 67 739 66.5" fill="none" stroke="#2e9b3c" stroke-width="0.9"/>
<g><rect x="819" y="64.5" width="15.5" height="5.5" fill="#2f86e0"/><rect x="816" y="59.5" width="21" height="4" fill="#3a3a2a"/><path d="M817 59.5 Q816 54 822 53.2 L828 53 Q830 55 829 59.5 Z" fill="#dcdcd0"/><path d="M828 59.5 V54 L833 52.5 L836.5 56 L837.5 60 Z" fill="#6b6a44"/><rect x="831" y="54" width="3.5" height="2.5" fill="#a9b3a8"/><circle cx="819.5" cy="64.5" r="2" fill="#1a1a1a"/><circle cx="825" cy="64.5" r="2" fill="#1a1a1a"/><circle cx="834" cy="64.5" r="2" fill="#1a1a1a"/></g>
<text x="789.8" y="80.4" font-size="9.7" fill="#e8161b" font-weight="bold" stroke="#fff" stroke-width="1.2" paint-order="stroke" stroke-opacity="0.8" font-family="Liberation Sans">МАЗ Самосвал</text>
<circle cx="977" cy="46.7" r="10" fill="#fff" fill-opacity="0.6"/><path d="M976.5 39.2 Q970 40 969.6 47 Q971 45 976.5 39.2 Z" fill="#e31c45" stroke="#e31c45" stroke-width="1.4" stroke-linejoin="round"/><path d="M970 49 Q973 55.5 981.5 54.5 Q976 53 970 49 Z" fill="#e31c45" stroke="#e31c45" stroke-width="1.4" stroke-linejoin="round"/><path d="M979.5 39.5 Q984.5 44 983.5 51.5 Q981.5 45 979.5 39.5 Z" fill="#1f5fb0" stroke="#1f5fb0" stroke-width="1.4" stroke-linejoin="round"/>
<text x="374" y="136.2" font-size="6.8" font-weight="bold" fill="#222" font-family="Liberation Sans">5 km</text>
<path d="M360.5 129.6 V148 M360 138.8 H423 M399.2 129.6 V138.8 M422.4 138.8 V148" fill="none" stroke="#1a1a1a" stroke-width="1.5"/>
<text x="357.4" y="153.4" font-size="12" font-weight="bold" fill="#fff" stroke="#b8b8b8" stroke-width="1.4" paint-order="stroke" font-family="Liberation Sans">Google</text>
<text x="382.6" y="146.6" font-size="6.8" font-weight="bold" fill="#1a1a1a" font-family="Liberation Sans">5 mi</text>
<rect x="369.2" y="142" width="6.8" height="20" rx="2.5" fill="#9c9c9c"/>
<rect x="364" y="38" width="18.4" height="17.6" rx="2" fill="#fff"/>
<path d="M368 47 Q373 41.5 378 47 Q373 52.5 368 47 Z" fill="none" stroke="#666" stroke-width="1"/><circle cx="373" cy="47" r="1.8" fill="#666"/>
<rect x="364" y="67.9" width="18.4" height="18.1" rx="2" fill="#fff"/>
<path d="M366.8 72.6 L370.2 71.2 L373.2 72.6 L376.4 71.2 L379.6 72.6 V82.4 L376.4 81 L373.2 82.4 L370.2 81 L366.8 82.4 Z" fill="#6b6b6b"/><path d="M370.2 71.6 V80.8 M376.4 71.6 V80.8" stroke="#fff" stroke-width="0.5"/>
<rect x="364" y="97.2" width="18.4" height="37.6" rx="2" fill="#fff"/><rect x="365" y="115.6" width="16.4" height="0.8" fill="#e6e6e6"/>
<path d="M370 106 H376.5 M373.25 102.7 V109.3" stroke="#666" stroke-width="1.2"/><path d="M370 125 H376.5" stroke="#666" stroke-width="1.2"/>
<rect x="752" y="149.5" width="245" height="8.5" fill="#f4f4f4" fill-opacity="0.7"/>
<text x="756.6" y="157" font-size="7.35" fill="#444" font-family="Liberation Sans">Картографические данные ® 2021 Google</text>
<text x="909.6" y="157" font-size="7.35" fill="#444" font-family="Liberation Sans">Условия использования</text>
<text x="859.5" y="147.4" font-size="9.15" font-weight="bold" fill="#111" font-family="Liberation Sans">N 50° 24.5063' : E 030° 43.9216'</text>
</svg>
</div>
<div id="sep2" class="a"></div>

<!-- toolbar -->
<div id="tb" class="a">
  <svg class="a" style="left:0;top:0" width="645" height="21" viewBox="352 163 645 21">
    <g fill="none" stroke="#a3a3a3" stroke-width="1.1">
      <path d="M361.5 171 L358.8 174 L361.5 177 M365 171 L362.3 174 L365 177"/>
      <path d="M383.8 171 L380.8 174 L383.8 177"/>
      <path d="M446 171 L449 174 L446 177"/>
      <path d="M465.2 171 L467.9 174 L465.2 177 M468.7 171 L471.4 174 L468.7 177"/>
    </g>
    <rect x="394.5" y="165.5" width="22" height="15.5" rx="1" fill="#f3f3f3" stroke="#c4c4c4"/>
    <rect x="600.5" y="165.5" width="33" height="15.8" fill="#fff" stroke="#cfcfcf"/>
    <path d="M622.5 171.5 h5.6 l-2.8 3 z" fill="#111"/>
    <g fill="#d7d7d7">
      <rect x="477" y="163" width="1" height="21"/>
      <rect x="589" y="163" width="1" height="21"/>
      <rect x="644" y="163" width="1" height="21"/>
      <rect x="741" y="163" width="1" height="21"/>
      <rect x="769" y="163" width="1" height="21"/>
      <rect x="825.5" y="163" width="1" height="21"/>
      <rect x="854" y="163" width="1" height="21"/>
      <rect x="882.5" y="163" width="1" height="21"/>
      <rect x="941" y="163" width="1" height="21"/>
    </g>
    <!-- doc icon -->
    <rect x="751.5" y="167.5" width="9.8" height="11.2" fill="#fff" stroke="#6a6a6a" stroke-width="1.1"/>
    <rect x="751.5" y="167.5" width="9.8" height="2.2" fill="#555"/>
    <rect x="753.2" y="171.6" width="6.4" height="1.5" fill="#8c8c8c"/>
    <rect x="753.2" y="174.6" width="6.4" height="1.5" fill="#8c8c8c"/>
    <!-- pdf -->
    <path d="M780 167.6 H787 L790 170.6 V179.3 H780 Z M787 167.6 V170.6 H790" fill="#fff" stroke="#e06a6a" stroke-width="1"/>
    <path d="M784.2 170.5 Q785.5 172 784 175 Q783 177 782 177.2 M783.2 175.6 Q785.5 174.8 787.5 175" fill="none" stroke="#d44" stroke-width="0.9"/>
    <!-- xls -->
    <path d="M807.6 167.6 H814.8 L817.8 170.6 V179.3 H807.6 Z M814.8 167.6 V170.6 H817.8" fill="#fff" stroke="#7cc48c" stroke-width="1"/>
    <path d="M810.8 173.8 L814.2 177.4 M814.2 173.8 L810.8 177.4" stroke="#4ea35e" stroke-width="1"/>
    <!-- import -->
    <path d="M836.4 167.6 H843.2 L846.2 170.6 V179.3 H836.4 Z M843.2 167.6 V170.6 H846.2" fill="#fff" stroke="#666" stroke-width="1"/>
    <path d="M838.5 174.4 L841.2 172.2 V176.6 Z M840.5 173.6 H844.2 V175.2 H840.5 Z" fill="#333"/>
    <!-- print -->
    <path d="M866 172 V168 H872.5 L874 169.5 V172" fill="#fff" stroke="#777" stroke-width="1"/>
    <rect x="864" y="172" width="12" height="5" rx="1" fill="#fff" stroke="#777" stroke-width="1"/>
    <rect x="866" y="175" width="8" height="4.5" fill="#fff" stroke="#777" stroke-width="1"/>
    <rect x="867" y="176.5" width="6" height="0.9" fill="#999"/>
    <!-- clear btn -->
    <rect x="889.5" y="166" width="45.5" height="15.3" rx="2" fill="#fff" stroke="#cfcfcf"/>
    <!-- toggle -->
    <rect x="945.5" y="166" width="44.8" height="15.3" rx="2" fill="#e9e9e9" stroke="#cfcfcf"/>
    <path d="M947 166.5 H968 V180.8 H947 Q946 180.8 946 179.8 V167.5 Q946 166.5 947 166.5 Z" fill="#fff"/>
    <rect x="968" y="166" width="0.8" height="15.3" fill="#dcdcdc"/>
    <path d="M952.5 169.8 L955.5 168.6 L958.8 169.8 L962 168.6 V177.8 L958.8 179 L955.5 177.8 L952.5 179 Z M955.5 168.6 V177.8 M958.8 169.8 V179" fill="none" stroke="#666" stroke-width="1"/>
    <rect x="974.5" y="168.5" width="9" height="9.5" fill="none" stroke="#9a9a9a" stroke-width="1"/>
    <rect x="975" y="172.7" width="8" height="1" fill="#9a9a9a"/>
  </svg>
  <span class="a" style="left:50.5px;top:5px;color:#a8a8a8;font-size:9px">1</span>
  <span class="a" style="left:66.5px;top:5px;color:#333;font-size:9px">из 1</span>
  <span class="a" style="left:135px;top:5px;color:#333;font-size:9px">Строки с 1 по 24 из 24</span>
  <span class="a" style="left:252px;top:5px;color:#555;font-size:9px">50</span>
  <span class="a" style="left:541.5px;top:5px;color:#2d6fa8;font-size:9px">Очистить</span>
</div>

<!-- table -->
<div id="tbl" class="a">
<div class="r" style="top:0px;height:15px"><div class="k">Отчет</div><div class="v">Расхода топлива ДУТ</div></div>
<div class="r" style="top:15px;height:14px"><div class="k">Объект</div><div class="v">МАЗ Самосвал</div></div>
<div class="r" style="top:29px;height:15px"><div class="k">Начало интервала</div><div class="v">01.03.2021 00:00:00</div></div>
<div class="r" style="top:44px;height:15px"><div class="k">Конец интервала</div><div class="v">31.03.2021 23:59:59</div></div>
<div class="r" style="top:59px;height:14px"><div class="k">Всего топлива слито</div><div class="v">0.00 л</div></div>
<div class="r" style="top:73px;height:15px"><div class="k">Всего сливов</div><div class="v">0</div></div>
<div class="r" style="top:88px;height:15px"><div class="k">Всего заправлено</div><div class="v">241.90 л</div></div>
<div class="r" style="top:103px;height:14px"><div class="k">Всего заправок</div><div class="v">3</div></div>
<div class="r" style="top:117px;height:15px"><div class="k">Потрачено по ДУТ</div><div class="v">222.20 л</div></div>
<div class="r" style="top:132px;height:14px"><div class="k">Конечный пробег</div><div class="v">896.51 км</div></div>
<div class="r" style="top:146px;height:15px"><div class="k">Ср. расход по ДУТ (весь пробег)</div><div class="v">24.75 л/100 км</div></div>
<div class="r" style="top:161px;height:15px"><div class="k">Пробег по всем сообщениям</div><div class="v">897.93 км</div></div>
<div class="r" style="top:176px;height:14px"><div class="k">Потрачено</div><div class="v">222.20 л</div></div>
<div class="r" style="top:190px;height:15px"><div class="k">Нач. уровень</div><div class="v">35.95 л</div></div>
<div class="r" style="top:205px;height:15px"><div class="k">Кон. уровень</div><div class="v">55.65 л</div></div>
<div class="r" style="top:220px;height:14px"><div class="k">Потрачено по ДУТ в поездках</div><div class="v">212.89 л</div></div>
<div class="r" style="top:234px;height:15px"><div class="k">Продолжительность стоянок</div><div class="v">29 дней 20:55:21</div></div>
<div class="r" style="top:249px;height:15px"><div class="k">Количество стоянок</div><div class="v">57</div></div>
<div class="r" style="top:264px;height:14px"><div class="k">Пробег в поездках</div><div class="v">881.33 км</div></div>
<div class="r" style="top:278px;height:15px"><div class="k">Время в движении</div><div class="v">1 день 3:03:39</div></div>
<div class="r" style="top:293px;height:15px"><div class="k">Начальный пробег</div><div class="v">0.55 км</div></div>
<div class="r" style="top:308px;height:14px"><div class="k">Количество поездок</div><div class="v">56</div></div>
<div class="r" style="top:322px;height:15px"><div class="k">Потрачено в поездках</div><div class="v">212.89 л</div></div>
<div class="r" style="top:337px;height:15px"><div class="k">Ср. расход по ДУТ в поездках</div><div class="v">24.16 л/100 км</div></div>
</div>

<div id="rb" class="a"></div>
<div id="rb2" class="a"></div>
<div id="bot" class="a"></div>
<div id="ftr" class="a"></div>
<div id="ftr2" class="a"></div>
<svg class="a" style="left:0;top:541px" width="1000" height="21" viewBox="0 541 1000 21">
  <rect x="1" y="542" width="1" height="18" fill="#c9c9c9"/>
  <rect x="29" y="542" width="1" height="18" fill="#cdcdcd"/>
  <rect x="55.2" y="542" width="1" height="18" fill="#cdcdcd"/>
  <rect x="10" y="546.4" width="10.6" height="9" fill="#fff" stroke="#666" stroke-width="0.9"/>
  <rect x="9.6" y="546" width="3.2" height="9.8" fill="#333"/>
  <g fill="#333">
    <rect x="37.2" y="546.2" width="2.8" height="2.6"/><rect x="41.2" y="546.2" width="2.8" height="2.6"/><rect x="45.2" y="546.2" width="2.8" height="2.6"/>
    <rect x="37.2" y="549.8" width="2.8" height="2.6"/><rect x="41.2" y="549.8" width="2.8" height="2.6"/><rect x="45.2" y="549.8" width="2.8" height="2.6"/>
    <rect x="37.2" y="553.4" width="2.8" height="2.6"/><rect x="41.2" y="553.4" width="2.8" height="2.6"/><rect x="45.2" y="553.4" width="2.8" height="2.6"/>
  </g>
  <rect x="756" y="542" width="1" height="18" fill="#d2d2d2"/>
  <rect x="880.3" y="542" width="1" height="18" fill="#d2d2d2"/>
  <rect x="910" y="542" width="1" height="18" fill="#d2d2d2"/>
  <rect x="997" y="542" width="1" height="18" fill="#c9c9c9"/>
  <!-- doc -->
  <rect x="765.2" y="546.3" width="12" height="9.5" fill="#d3d3d3"/>
  <rect x="766.3" y="548.6" width="9.8" height="1.3" fill="#efefef"/>
  <rect x="766.8" y="551.4" width="6" height="0.9" fill="#efefef"/>
  <rect x="766.8" y="553.4" width="4" height="0.9" fill="#efefef"/>
  <circle cx="786.8" cy="550.3" r="5.6" fill="#7c7c7c"/>
  <!-- mail -->
  <path d="M802 546.5 H814.5 V555.5 H802 Z" fill="#d5d5d5"/>
  <path d="M802 546.8 L808.2 551.6 L814.5 546.8" fill="none" stroke="#efefef" stroke-width="1"/>
  <path d="M813 552.6 H818 M815.5 550.1 V555.1" stroke="#d0d0d0" stroke-width="1.6"/>
  <circle cx="827.6" cy="550.3" r="5.6" fill="#7c7c7c"/>
  <!-- image -->
  <rect x="843.2" y="546.3" width="11.6" height="9.6" fill="#d3d3d3"/>
  <path d="M844.2 555 L848 550.5 L851 553 L852.5 551.5 L854 553 V555 Z" fill="#ececec"/>
  <circle cx="846.4" cy="548.8" r="1.1" fill="#ececec"/>
  <circle cx="864.5" cy="550.3" r="5.6" fill="#7c7c7c"/>
  <g font-family="Liberation Sans" font-weight="bold" font-size="8.6" fill="#fff" text-anchor="middle"><text x="786.8" y="553.4">0</text><text x="827.6" y="553.4">0</text><text x="864.5" y="553.4">0</text></g>
  <!-- columns -->
  <rect x="888" y="547.2" width="6.4" height="7.6" fill="#d5d5d5"/><rect x="895.4" y="547.2" width="6.4" height="7.6" fill="#d5d5d5"/>
  <path d="M889 549.2 H893.4 M889 551 H893.4 M889 552.8 H893.4" stroke="#eaeaea" stroke-width="0.7"/>
</svg>
<span class="a" style="left:386px;top:546px;color:#555;font-weight:bold;font-size:8.8px">© GPSM</span>
<span class="a" style="left:925.5px;top:546px;color:#444;font-size:8.8px">18:05:10 (+02)</span>

</body></html>
